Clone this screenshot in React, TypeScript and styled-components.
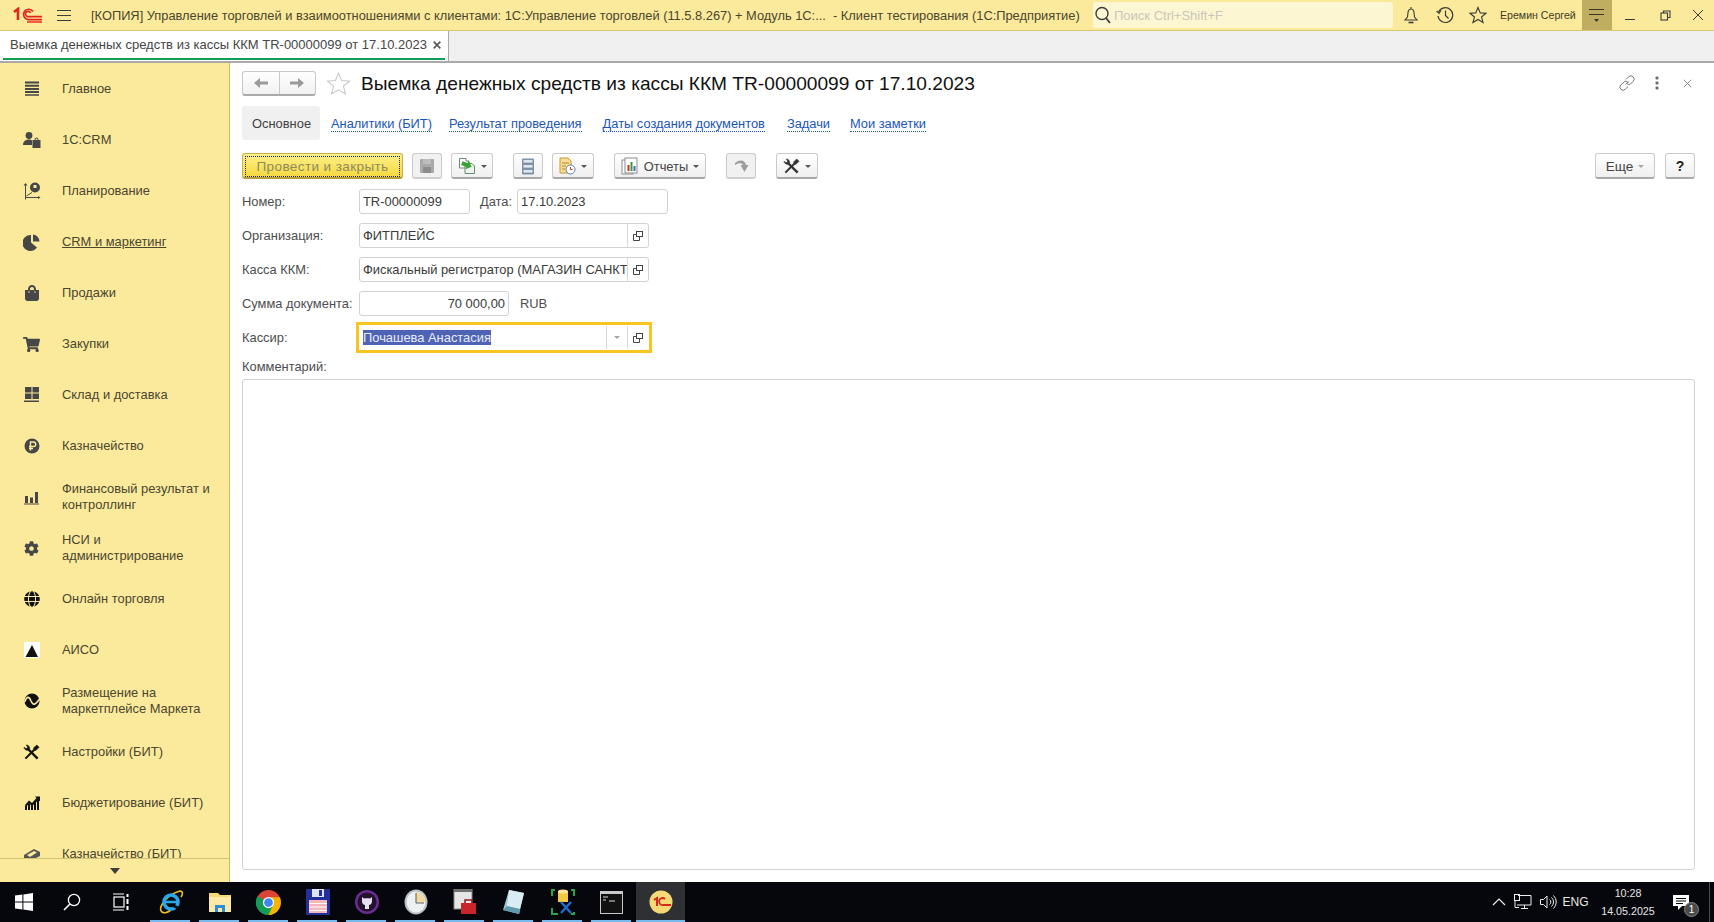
import React from "react";
import styled, { createGlobalStyle } from "styled-components";
import { FaCog, FaShoppingCart, FaGlobe, FaShoppingBag } from "react-icons/fa";

const Global = createGlobalStyle`
  html, body { margin: 0; padding: 0; height: 100%; overflow: hidden; }
  body { font-family: "Liberation Sans", Arial, sans-serif; font-size: 12.9px; color: #4b4b4b; }
`;

const Page = styled.div`
  width: 1714px;
  height: 922px;
  display: flex;
  flex-direction: column;
  overflow: hidden;
  background: #fff;
`;

const TopBar = styled.div`
  height: 30px;
  flex: none;
  display: flex;
  align-items: center;
  background: #fbea9b;
  border-bottom: 1px solid #d6c66f;
`;

const Logo = styled.div`
  width: 30px;
  height: 16px;
  margin-left: 13px;
  display: flex;
`;

const Burger = styled.div`
  margin-left: 14px;
  width: 14px;
  display: flex;
  flex-direction: column;
  gap: 4px;
  & > i { display: block; height: 1px; background: #3d3d3d; }
`;

const AppTitle = styled.div`
  margin-left: 20px;
  width: 1002px;
  flex: none;
  white-space: pre;
  color: #4a4630;
  font-size: 12.85px;
`;

const Search = styled.div`
  width: 300px;
  height: 26px;
  flex: none;
  box-sizing: border-box;
  padding-left: 1px;
  display: flex;
  align-items: center;
  gap: 2px;
  background: #fdf6d2;
  border-radius: 2px;
  color: #c9c6bb;
  font-size: 13px;
`;

const BarIcon = styled.div<{ $w: number }>`
  width: ${(p) => p.$w}px;
  flex: none;
  display: flex;
  justify-content: center;
  align-items: center;
  color: #3d3d3d;
`;

const UserName = styled.div`
  width: 82px;
  flex: none;
  font-size: 10.6px;
  color: #3d3a28;
  white-space: nowrap;
  margin-left: 5px;
`;

const MenuToggle = styled.div`
  width: 30px;
  height: 30px;
  flex: none;
  background: #bfae62;
  display: flex;
  justify-content: center;
  align-items: center;
`;

const TabBar = styled.div`
  height: 32px;
  flex: none;
  display: flex;
  box-sizing: border-box;
  background: #f0f0f0;
  border-bottom: 2px solid #a9a9a9;
`;

const DocTab = styled.div`
  width: 449px;
  box-sizing: border-box;
  background: #fff;
  border-right: 1px solid #a9a9a9;
  padding: 0 3px;
  display: flex;
  flex-direction: column;
`;

const DocTabLabel = styled.div`
  flex: 1;
  display: flex;
  align-items: center;
  justify-content: space-between;
  padding: 0 4px 0 7px;
  white-space: nowrap;
  color: #454545;
  font-size: 13px;
`;

const DocTabLine = styled.div`
  height: 2px;
  margin-bottom: 1px;
  background: #0f9d58;
`;

const Body = styled.div`
  flex: 1;
  display: flex;
  min-height: 0;
`;

const Side = styled.nav`
  width: 230px;
  flex: none;
  box-sizing: border-box;
  display: flex;
  flex-direction: column;
  background: #fbea9b;
  border-right: 1px solid #c9b96b;
`;

const SideList = styled.div`
  flex: 1;
  min-height: 0;
  overflow: hidden;
`;

const SideItem = styled.div`
  height: 51px;
  box-sizing: border-box;
  padding-top: 1px;
  display: flex;
  align-items: center;
`;

const SideIcon = styled.div`
  width: 62px;
  flex: none;
  display: flex;
  justify-content: center;
  color: #474747;
  padding-left: 1px;
  box-sizing: border-box;
`;

const SideText = styled.div<{ $active?: boolean }>`
  line-height: 16px;
  color: #4a4630;
  font-size: 12.9px;
  text-decoration: ${(p) => (p.$active ? "underline" : "none")};
  white-space: pre-line;
`;

const SideFoot = styled.div`
  height: 23px;
  flex: none;
  border-top: 1px solid #d2c273;
  display: flex;
  justify-content: center;
  align-items: center;
`;

const Main = styled.main`
  flex: 1;
  min-width: 0;
  box-sizing: border-box;
  padding: 8px 19px 12px 12px;
  display: flex;
  flex-direction: column;
`;

const HeadRow = styled.div`
  height: 24px;
  flex: none;
  display: flex;
  align-items: center;
`;

const NavGroup = styled.div`
  width: 74px;
  height: 25px;
  box-sizing: border-box;
  display: flex;
  border: 1px solid #c9c9c9;
  border-bottom: 2px solid #aaa;
  border-radius: 3px;
  background: linear-gradient(#fff, #f1f1f1);
`;

const NavCell = styled.div<{ $sep?: boolean }>`
  flex: 1;
  display: flex;
  justify-content: center;
  align-items: center;
  border-left: ${(p) => (p.$sep ? "1px solid #c9c9c9" : "none")};
`;

const StarBox = styled.div`
  margin-left: 10px;
  width: 25px;
  display: flex;
  justify-content: center;
`;

const DocTitle = styled.h1`
  margin: 0 0 0 10px;
  padding-top: 1px;
  font-size: 19.15px;
  font-weight: 400;
  color: #111;
  white-space: nowrap;
  flex: 1;
`;

const HeadTools = styled.div`
  display: flex;
  align-items: center;
  margin-right: -7px;
`;

const HeadTool = styled.div`
  width: 30px;
  display: flex;
  justify-content: center;
  align-items: center;
  color: #777;
`;

const Tabs = styled.div`
  margin-top: 11px;
  height: 34px;
  flex: none;
  display: flex;
  align-items: center;
`;

const TabCurrent = styled.div`
  height: 34px;
  width: 78px;
  box-sizing: border-box;
  padding-left: 10px;
  display: flex;
  align-items: center;
  background: #f0f0f0;
  border-radius: 3px;
  color: #3f3f3f;
`;

const TabLink = styled.a<{ $gap: number }>`
  margin-left: ${(p) => p.$gap}px;
  margin-top: 2px;
  font-size: 12.85px;
  color: #1a55b8;
  white-space: nowrap;
  border-bottom: 1px dotted #1a55b8;
  line-height: 14px;
`;

const Toolbar = styled.div`
  margin-top: 13px;
  height: 26px;
  flex: none;
  display: flex;
`;

const Btn = styled.div<{ $w: number; $gap: number; $off?: boolean }>`
  width: ${(p) => p.$w}px;
  margin-left: ${(p) => p.$gap}px;
  height: 26px;
  box-sizing: border-box;
  padding-top: 1px;
  flex: none;
  display: flex;
  align-items: center;
  justify-content: center;
  gap: 5px;
  border: 1px solid #cacaca;
  border-bottom: 2px solid ${(p) => (p.$off ? "#cfcfcf" : "#a8a8a8")};
  border-radius: 3px;
  background: ${(p) => (p.$off ? "#f1f1f1" : "linear-gradient(#fff, #f0f0f0)")};
  color: #454545;
  white-space: nowrap;
`;

const MoreLabel = styled.span`
  font-size: 13.6px;
`;

const HelpMark = styled.b`
  color: #222;
  font-size: 14px;
`;

const PrimaryBtn = styled.div`
  width: 161px;
  height: 26px;
  flex: none;
  box-sizing: border-box;
  padding: 2px;
  border: 1px solid #c9b24a;
  border-bottom: 2px solid #b29c3c;
  border-radius: 3px;
  background: linear-gradient(#fdf08a, #f6d93f);
`;

const PrimaryInner = styled.div`
  height: 100%;
  border: 1px dotted #1d1d7a;
  display: flex;
  align-items: center;
  justify-content: center;
  color: #8d8a63;
  font-size: 13.5px;
  letter-spacing: 0.4px;
`;

const Spacer = styled.div`
  flex: 1;
`;

const Caret = styled.i<{ $pale?: boolean }>`
  display: block;
  width: 0;
  height: 0;
  border-left: 3px solid transparent;
  border-right: 3px solid transparent;
  border-top: 3px solid ${(p) => (p.$pale ? "#a5a5a5" : "#555")};
`;

const Form = styled.div`
  margin-top: 10px;
  display: flex;
  flex-direction: column;
  gap: 9px;
  flex: none;
`;

const Row = styled.div`
  height: 25px;
  display: flex;
  align-items: center;
`;

const Label = styled.div<{ $w?: number; $gap?: number }>`
  width: ${(p) => p.$w ?? 117}px;
  margin-left: ${(p) => p.$gap ?? 0}px;
  flex: none;
  color: #4d4d4d;
  white-space: nowrap;
`;

const Field = styled.div<{ $w: number; $focus?: boolean }>`
  width: ${(p) => p.$w}px;
  height: 25px;
  flex: none;
  box-sizing: border-box;
  display: flex;
  align-items: center;
  border: 1px solid ${(p) => (p.$focus ? "transparent" : "#d2d2d2")};
  border-radius: ${(p) => (p.$focus ? "0" : "3px")};
  outline: ${(p) => (p.$focus ? "3px solid #f8c520" : "none")};
  color: #3a3a3a;
  background: #fff;
`;

const FieldText = styled.div<{ $right?: boolean }>`
  flex: 1;
  min-width: 0;
  padding: 0 3px;
  overflow: hidden;
  white-space: nowrap;
  text-align: ${(p) => (p.$right ? "right" : "left")};
`;

const Selected = styled.span`
  background: #4f63b5;
  color: #e9ecf8;
  padding: 2px 0;
`;

const FieldBtn = styled.div`
  width: 20px;
  height: 23px;
  flex: none;
  display: flex;
  align-items: center;
  justify-content: center;
  border-left: 1px solid #d9d9d9;
`;

const Currency = styled.div`
  margin-left: 11px;
  color: #4d4d4d;
`;

const CommentLabel = styled.div`
  margin-top: 8px;
  height: 18px;
  line-height: 18px;
  flex: none;
  color: #4d4d4d;
`;

const Comment = styled.div`
  margin-top: 3px;
  flex: 1;
  border: 1px solid #d2d2d2;
  border-radius: 3px;
`;

const Taskbar = styled.footer`
  height: 40px;
  flex: none;
  display: flex;
  align-items: center;
  background: #05070c;
  color: #e8e8e8;
  font-size: 12px;
`;

const TaskSlot = styled.div<{ $w: number; $on?: boolean; $active?: boolean }>`
  width: ${(p) => p.$w}px;
  height: 40px;
  flex: none;
  position: relative;
  display: flex;
  align-items: center;
  justify-content: center;
  background: ${(p) => (p.$active ? "#2e3033" : "transparent")};
  &::after {
    content: "";
    display: ${(p) => (p.$on ? "block" : "none")};
    position: absolute;
    left: ${(p) => (p.$active ? 0 : 4)}px;
    right: ${(p) => (p.$active ? 0 : 5)}px;
    bottom: 0;
    height: 2px;
    background: #76b9ed;
  }
`;

const Tray = styled.div<{ $w: number }>`
  width: ${(p) => p.$w}px;
  flex: none;
  display: flex;
  justify-content: center;
  align-items: center;
`;

const Clock = styled.div`
  width: 70px;
  margin-left: 3px;
  flex: none;
  text-align: center;
  line-height: 18px;
  font-size: 10.7px;
`;

const Badge = styled.div`
  position: absolute;
  right: 0;
  bottom: 5px;
  width: 15px;
  height: 15px;
  border-radius: 50%;
  background: #4a4a4a;
  border: 1px solid #888;
  box-sizing: border-box;
  font-size: 10px;
  line-height: 13px;
  text-align: center;
  color: #fff;
`;

const ShowDesktop = styled.div`
  width: 15px;
  height: 40px;
  flex: none;
  box-sizing: border-box;
  margin-left: 0;
  padding-left: 10px;
  &::before {
    content: "";
    display: block;
    width: 1px;
    height: 40px;
    background: #4c4c4c;
  }
`;

const Logo1C = () => (
  <svg width="30" height="16" viewBox="0 0 30 16" fill="none" stroke="#e3241b">
    <path d="M1 5 L5 2 V13" strokeWidth="2.6" />
    <path d="M20 4.5 A5.2 5.2 0 1 0 15 12.6 H29" strokeWidth="1.7" />
    <path d="M17.5 6 A2.6 2.6 0 1 0 15.5 9.6 H29" strokeWidth="1.6" />
    <path d="M14 15 H29" strokeWidth="1.4" />
  </svg>
);

const Glass = () => (
  <svg width="18" height="20" viewBox="0 0 18 20" fill="none" stroke="#3c3c3c" strokeWidth="1.4">
    <circle cx="8" cy="8.5" r="6" />
    <path d="M12 13 L16 18" strokeWidth="1.8" />
  </svg>
);

const Bell = () => (
  <svg width="16" height="18" viewBox="0 0 16 18" fill="none" stroke="#3c3c3c" strokeWidth="1.1">
    <path d="M8 1 V2.5 M4.5 11 C5 6 5 3 8 3 C11 3 11 6 11.5 11 L14 14 H2 Z" />
    <path d="M5.5 16.5 H10.5" strokeWidth="1.6" />
  </svg>
);

const History = () => (
  <svg width="18" height="18" viewBox="0 0 18 18" fill="none" stroke="#3c3c3c" strokeWidth="1.2">
    <path d="M2.6 6 A7.4 7.4 0 1 1 2 10" />
    <path d="M0.6 5 L3 7.4 L5 4.4" />
    <path d="M9.5 4.5 V9.5 L12.5 12.5" />
  </svg>
);

const Star = ({ size, color }: { size: number; color: string }) => (
  <svg width={size} height={size} viewBox="0 0 24 24" fill="none" stroke={color} strokeWidth={size > 20 ? 1 : 1.5}>
    <path d="M12 2 L15 9.2 L22.6 9.7 L16.7 14.6 L18.7 22 L12 18 L5.3 22 L7.3 14.6 L1.4 9.7 L9 9.2 Z" />
  </svg>
);

const ToggleIcon = () => (
  <svg width="16" height="17" viewBox="0 0 16 17" fill="none" stroke="#3c3826">
    <path d="M0 2.5 H15 M0 7.5 H15" />
    <path d="M5 12 H10 L7.5 15 Z" fill="#3c3826" stroke="none" />
  </svg>
);

const WinMin = () => (
  <svg width="12" height="12" viewBox="0 0 12 12" stroke="#3c3c3c"><path d="M1 10.5 H11" /></svg>
);
const WinRestore = () => (
  <svg width="11" height="11" viewBox="0 0 11 11" fill="none" stroke="#3c3c3c" strokeWidth="1.1">
    <rect x="1" y="3" width="6.5" height="7" />
    <path d="M3.5 3 V1 H10 V7.5 H7.5" />
  </svg>
);
const WinClose = ({ size = 12, color = "#3c3c3c", weight = 1 }: { size?: number; color?: string; weight?: number }) => (
  <svg width={size} height={size} viewBox="0 0 12 12" stroke={color} strokeWidth={weight}><path d="M1 1 L11 11 M11 1 L1 11" /></svg>
);

const Arrow = ({ flip }: { flip?: boolean }) => (
  <svg width="14" height="12" viewBox="0 0 14 12" fill="#9a9a9a" style={{ transform: flip ? "scaleX(-1)" : "none" }}>
    <path d="M0 6 L6 1 V4.5 H14 V7.5 H6 V11 Z" />
  </svg>
);

const LinkIcon = () => (
  <svg width="16" height="16" viewBox="0 0 16 16" fill="none" stroke="#777" strokeWidth="1">
    <path d="M6.5 9.5 L9.5 6.5 M7 4.5 L9.7 1.8 A2.4 2.4 0 0 1 14.2 6.3 L11.5 9 A2.4 2.4 0 0 1 8 8.5" />
    <path d="M9 7.5 A2.4 2.4 0 0 0 5 7 L1.8 10 A2.4 2.4 0 0 0 6.3 14.2 L9 11.5" />
  </svg>
);

const Dots = () => (
  <svg width="4" height="14" viewBox="0 0 4 14" fill="#6f6f6f">
    <rect x="0.5" y="0.5" width="3" height="3" rx="1" />
    <rect x="0.5" y="5.5" width="3" height="3" rx="1" />
    <rect x="0.5" y="10.5" width="3" height="3" rx="1" />
  </svg>
);

const OpenIcon = () => (
  <svg width="10" height="10" viewBox="0 0 10 10" fill="none" stroke="#444">
    <rect x="3.5" y="0.5" width="6" height="5" />
    <path d="M3 3.5 H0.5 V9.5 H6.5 V6" />
  </svg>
);

const SaveIcon = () => (
  <svg width="16" height="16" viewBox="0 0 16 16">
    <rect x="1" y="1" width="14" height="14" rx="1" fill="#a9a9a9" />
    <rect x="4" y="1" width="8" height="5" fill="#bdbdbd" />
    <rect x="4" y="9" width="8" height="6" fill="#8c8c8c" />
  </svg>
);

const CopyIcon = () => (
  <svg width="18" height="18" viewBox="0 0 18 18">
    <path d="M1.5 1.5 H8 V4 H11 V11 H1.5 Z" fill="#fff" stroke="#6d8a6d" />
    <path d="M7 6.5 H14 L16.5 9 V16.5 H7 Z" fill="#eef3ee" stroke="#6d8a6d" />
    <path d="M3.5 6 L9 6 V3.5 L14 8 L9 12.5 V10 L3.5 10 Z" fill="#3aa335" transform="rotate(20 9 8)" />
  </svg>
);

const ListIcon = () => (
  <svg width="14" height="17" viewBox="0 0 14 17">
    <rect x="1" y="0.5" width="12" height="16" rx="1" fill="#7f93a8" />
    <rect x="2.5" y="2" width="9" height="2.6" fill="#dfe7ef" />
    <rect x="2.5" y="7" width="9" height="2.6" fill="#dfe7ef" />
    <rect x="2.5" y="12" width="9" height="2.6" fill="#dfe7ef" />
  </svg>
);

const DocClockIcon = () => (
  <svg width="17" height="18" viewBox="0 0 17 18">
    <path d="M1 1 H9 L12 4 V16 H1 Z" fill="#f8dd92" stroke="#c69a3a" />
    <path d="M3 6 H10 M3 9 H7 M3 12 H6" stroke="#b08a3a" />
    <circle cx="11.5" cy="12.5" r="4.5" fill="#fff" stroke="#5d7fa8" />
    <path d="M11.5 10 V12.5 H13.5" stroke="#c0392b" fill="none" />
  </svg>
);

const ReportIcon = () => (
  <svg width="18" height="18" viewBox="0 0 18 18">
    <rect x="1" y="3" width="11" height="14" fill="#fff" stroke="#8d8d8d" />
    <rect x="4" y="1" width="12" height="15" fill="#fff" stroke="#8d8d8d" />
    <rect x="6.5" y="8" width="2" height="6" fill="#c0392b" />
    <rect x="9.5" y="5" width="2" height="9" fill="#3a9a3a" />
    <rect x="12.5" y="9" width="2" height="5" fill="#3a6fc0" />
  </svg>
);

const TurnIcon = () => (
  <svg width="15" height="14" viewBox="0 0 15 14" fill="#9d9d9d">
    <path d="M1 4 C6 0 11 1 12 6 H14.5 L10.5 13 L6.5 6 H9 C8 4 5 3.5 1 6 Z" />
  </svg>
);

const ToolsX = ({ size, color }: { size: number; color: string }) => (
  <svg width={size} height={size} viewBox="0 0 18 18" fill="none" stroke={color}>
    <path d="M4.5 4.5 L15.5 15.5" strokeWidth="2.6" />
    <path d="M1 3.5 A3.6 3.6 0 0 0 5.5 6.5 L7 5 A3.6 3.6 0 0 0 3.5 1 L5 3.5 L3.5 5 Z" fill={color} strokeWidth="0.6" />
    <path d="M13 5 L2.5 15.5" strokeWidth="2.2" />
    <path d="M11 4.5 L14.5 1 L17 3.5 L13.5 7 Z" fill={color} strokeWidth="0.6" />
  </svg>
);

const icon = (d: React.ReactNode, color = "currentColor", w = 18, h = 18) => (
  <svg width={w} height={h} viewBox="0 0 18 18" fill={color}>{d}</svg>
);

const sideItems: { label: string; icon: React.ReactNode; active?: boolean }[] = [
  {
    label: "Главное",
    icon: icon(<path d="M2 1.5 H16 V3.5 H2 Z M2 4.7 H16 V6.7 H2 Z M2 7.9 H16 V9.9 H2 Z M2 11.1 H16 V13.1 H2 Z M2 14.3 H16 V15.8 H2 Z" />),
  },
  {
    label: "1С:CRM",
    icon: icon(
      <>
        <circle cx="6" cy="4.5" r="3.4" />
        <path d="M0 14 C0 10 3 8.5 6 8.5 C7.5 8.5 8.5 9 9 9.5 V14 Z" />
        <path d="M9.5 9 H17.5 V17 H9.5 Z M11.5 9 C11.5 5.5 15.5 5.5 15.5 9 H14.5 C14.5 7 12.5 7 12.5 9 Z" />
      </>,
    ),
  },
  {
    label: "Планирование",
    icon: icon(
      <>
        <path d="M2.5 1 L4.5 3.5 H3 V15 H15 V14 L17.5 15.5 L15 17 V16 H3 V17.5 H2 V3.5 H0.5 Z" />
        <circle cx="12" cy="5.5" r="5" />
        <path d="M3.5 14 L9 10.5" stroke="currentColor" strokeWidth="1" />
        <path d="M10.5 3 H13.5 V6 H10.5 Z" fill="#fbea9b" />
      </>,
    ),
  },
  {
    label: "CRM и маркетинг",
    active: true,
    icon: icon(
      <>
        <path d="M8 2 V9.5 L14 14.5 A8 8 0 1 1 8 2 Z" />
        <path d="M10 1.5 A7.8 7.8 0 0 1 16.5 8.5 H10 Z" />
      </>,
    ),
  },
  { label: "Продажи", icon: <FaShoppingBag size={16} /> },
  { label: "Закупки", icon: <FaShoppingCart size={17} /> },
  {
    label: "Склад и доставка",
    icon: icon(<path d="M2 1 H8.5 V6.5 H2 Z M9.5 1 H16 V6.5 H9.5 Z M2 7.5 H8.5 V13 H2 Z M9.5 7.5 H16 V13 H9.5 Z M1 14.5 H16 V16 H1 Z" />),
  },
  {
    label: "Казначейство",
    icon: (
      <svg width="16" height="16" viewBox="0 0 16 16">
        <circle cx="8" cy="8" r="7.5" fill="currentColor" />
        <path d="M6.5 12.5 V4 H9.5 A2.2 2.2 0 0 1 9.5 8.5 H5 M5 10.5 H9" fill="none" stroke="#fbea9b" strokeWidth="1.4" />
      </svg>
    ),
  },
  {
    label: "Финансовый результат и\nконтроллинг",
    icon: icon(<path d="M2 8 H5 V15 H2 Z M7 9.5 H10 V15 H7 Z M12 4 H15 V15 H12 Z M1 15.5 H16 V16.5 H1 Z" />),
  },
  { label: "НСИ и\nадминистрирование", icon: <FaCog size={15} /> },
  { label: "Онлайн торговля", icon: <FaGlobe size={16} color="#111" /> },
  {
    label: "АИСО",
    icon: (
      <svg width="16" height="16" viewBox="0 0 16 16">
        <rect width="16" height="16" fill="#fff" />
        <path d="M8 3 L14 15 H1.5 Z" fill="#111" />
      </svg>
    ),
  },
  {
    label: "Размещение на\nмаркетплейсе Маркета",
    icon: (
      <svg width="16" height="16" viewBox="0 0 16 16">
        <circle cx="8" cy="8" r="7.5" fill="#111" />
        <path d="M0.5 9 C3 3 5 3 7 8 C9 12.5 11 12.5 15.5 6" fill="none" stroke="#fbea9b" strokeWidth="1.6" />
      </svg>
    ),
  },
  { label: "Настройки (БИТ)", icon: <ToolsX size={17} color="#111" /> },
  {
    label: "Бюджетирование (БИТ)",
    icon: (
      <svg width="16" height="16" viewBox="0 0 16 16" fill="#111">
        <path d="M1 15 H3 V11 H1 Z M4 15 H6 V9 H4 Z M7 15 H9 V10 H7 Z M10 15 H12 V7 H10 Z M13 15 H15 V5 H13 Z" />
        <path d="M1 10 L5 5.5 L8 8 L12.5 3 L11 1.5 H16 V6.5 L14.5 5 L8 11 L5 8.5 L2 12 Z" />
      </svg>
    ),
  },
  {
    label: "Казначейство (БИТ)",
    icon: (
      <svg width="16" height="14" viewBox="0 0 16 14" fill="#555">
        <path d="M0 8 L10 2 L16 5 V9 L6 14 L0 11 Z" />
        <path d="M3 8 L10 4 L13 5.5 L6 10 Z" fill="#fbea9b" />
      </svg>
    ),
  },
];

const Win = () => (
  <svg width="18" height="18" viewBox="0 0 18 18" fill="#fff">
    <path d="M0 2.6 L7.4 1.6 V8.5 H0 Z M8.4 1.4 L18 0 V8.5 H8.4 Z M0 9.5 H7.4 V16.4 L0 15.4 Z M8.4 9.5 H18 V18 L8.4 16.6 Z" />
  </svg>
);
const SearchTb = () => (
  <svg width="18" height="18" viewBox="0 0 18 18" fill="none" stroke="#fff" strokeWidth="1.3">
    <circle cx="11" cy="7" r="5.6" />
    <path d="M7 11 L1 17" strokeWidth="1.6" />
  </svg>
);
const TaskView = () => (
  <svg width="17" height="18" viewBox="0 0 17 18" fill="none" stroke="#fff" strokeWidth="1.2">
    <path d="M0 1 H11 M0 17 H11" />
    <rect x="1" y="4" width="10" height="10" />
    <path d="M14.5 1 V4 M14.5 6 V11 M14.5 13 V17" strokeWidth="2" />
  </svg>
);
const IE = () => (
  <svg width="26" height="26" viewBox="0 0 26 26" fill="none">
    <path d="M3 22 C1 18 8 6 22 2 C25 2 25 5 23 8" stroke="#f2c316" strokeWidth="1.6" />
    <path d="M3 22 C5 25 9 24 13 21" stroke="#f2c316" strokeWidth="1.6" />
    <circle cx="13" cy="13" r="7" stroke="#2ba6e6" strokeWidth="3.6" />
    <path d="M7 13 H20" stroke="#2ba6e6" strokeWidth="2.6" />
    <path d="M16 17 L22 20" stroke="#05070c" strokeWidth="3" />
  </svg>
);
const Folder = () => (
  <svg width="24" height="24" viewBox="0 0 24 24">
    <path d="M1 3 H10 L12 5 H23 V22 H1 Z" fill="#f8d775" />
    <rect x="1" y="7" width="22" height="15" fill="#fce9a8" />
    <path d="M7 22 V15 H17 V22 H14 V18 H10 V22 Z" fill="#2a8fd8" />
  </svg>
);
const Chrome = () => (
  <svg width="25" height="25" viewBox="0 0 24 24">
    <circle cx="12" cy="12" r="12" fill="#db4437" />
    <path d="M12 12 L1.6 6 A12 12 0 0 0 12 24 L18 13.5 Z" fill="#0f9d58" />
    <path d="M12 7 H22.8 A12 12 0 0 1 12 24 L17 13 Z" fill="#f4b400" />
    <circle cx="12" cy="12" r="5.4" fill="#fff" />
    <circle cx="12" cy="12" r="4.2" fill="#4285f4" />
  </svg>
);
const Floppy = () => (
  <svg width="24" height="26" viewBox="0 0 24 26">
    <rect width="24" height="26" rx="1" fill="#23309a" />
    <rect x="6" y="0" width="12" height="8" fill="#dfe4f2" />
    <rect x="13" y="1" width="3" height="6" fill="#23309a" />
    <rect x="3" y="11" width="18" height="13" fill="#f6b6bd" />
    <path d="M3 14.5 H21 M3 18 H21 M3 21.5 H21" stroke="#fff" />
  </svg>
);
const GitHubTb = () => (
  <svg width="24" height="24" viewBox="0 0 24 24">
    <circle cx="12" cy="12" r="12" fill="#6b2c91" />
    <circle cx="12" cy="12" r="9.6" fill="#22122e" />
    <path d="M7 7 L9 8.5 C11 8 13 8 15 8.5 L17 7 V11 C17 14 15 15 14 15 V19 H10 V15 C9 15 7 14 7 11 Z" fill="#e8dff0" />
  </svg>
);
const ClockIcon = () => (
  <svg width="24" height="26" viewBox="0 0 24 26">
    <ellipse cx="12" cy="13" rx="11.5" ry="12.5" fill="#b7c0c6" />
    <ellipse cx="12" cy="13" rx="9.5" ry="10.5" fill="#eef1f2" />
    <path d="M12 13 V3 A9.5 10 0 0 1 21.5 13 Z" fill="#f2d9a0" />
    <path d="M12 4 V14 H20" stroke="#5a5a5a" fill="none" />
  </svg>
);
const Toolbox = () => (
  <svg width="24" height="26" viewBox="0 0 24 26">
    <rect x="1" y="0" width="18" height="20" fill="#e6e6e6" stroke="#888" />
    <rect x="1" y="0" width="18" height="3" fill="#6f6f6f" />
    <path d="M8 14 H23 V25 H8 Z" fill="#c9262b" />
    <path d="M12 14 V11 H19 V14" fill="none" stroke="#8c1b1e" strokeWidth="1.5" />
  </svg>
);
const Notepad = () => (
  <svg width="24" height="26" viewBox="0 0 24 26">
    <path d="M7 1 L22 4 L17 25 L1 21 Z" fill="#9cc7d6" />
    <path d="M7 1 L22 4 L18 20 L5 17 Z" fill="#d9ecf1" />
    <path d="M1 21 L17 25 L18 20 L5 17 Z" fill="#5e9bb0" />
  </svg>
);
const DbTool = () => (
  <svg width="24" height="26" viewBox="0 0 24 26" fill="none">
    <path d="M7 2 H17 V13 H7 Z" fill="#f2c744" />
    <ellipse cx="12" cy="2.5" rx="5" ry="2" fill="#fbe39a" />
    <path d="M1 7 V1 H4 M20 1 H23 V7 M1 19 V25 H7 M23 23 V25 H20" stroke="#2aa34a" strokeWidth="2" />
    <path d="M10 24 L20 13 M20 24 L10 13" stroke="#1f6fd0" strokeWidth="2.4" />
  </svg>
);
const Cmd = () => (
  <svg width="23" height="23" viewBox="0 0 23 23">
    <rect width="23" height="23" fill="#c9c9c9" />
    <rect x="1" y="3" width="21" height="19" fill="#111" />
    <path d="M3 6 H8 M3 9 H6 M9 10 H15" stroke="#ddd" strokeWidth="1.2" />
  </svg>
);
const OneC = () => (
  <svg width="24" height="24" viewBox="0 0 24 24" fill="none">
    <circle cx="12" cy="12" r="11.5" fill="#f6d977" />
    <path d="M5 10 L8 8 V16" stroke="#d9261c" strokeWidth="2" />
    <path d="M16 9 A3.5 3.5 0 1 0 14 15 H22" stroke="#d9261c" strokeWidth="1.8" />
  </svg>
);

const taskApps: { node: React.ReactNode; active?: boolean }[] = [
  { node: <IE /> },
  { node: <Folder /> },
  { node: <Chrome /> },
  { node: <Floppy /> },
  { node: <GitHubTb /> },
  { node: <ClockIcon /> },
  { node: <Toolbox /> },
  { node: <Notepad /> },
  { node: <DbTool /> },
  { node: <Cmd /> },
  { node: <OneC />, active: true },
];

const tabLinks: [string, number][] = [
  ["Аналитики (БИТ)", 11],
  ["Результат проведения", 17],
  ["Даты создания документов", 21],
  ["Задачи", 22],
  ["Мои заметки", 20],
];

export default function App() {
  return (
    <Page>
      <Global />
      <TopBar>
        <Logo><Logo1C /></Logo>
        <Burger><i /><i /><i /></Burger>
        <AppTitle>[КОПИЯ] Управление торговлей и взаимоотношениями с клиентами: 1С:Управление торговлей (11.5.8.267) + Модуль 1С:...  - Клиент тестирования (1С:Предприятие)</AppTitle>
        <Search><Glass />Поиск Ctrl+Shift+F</Search>
        <BarIcon $w={36}><Bell /></BarIcon>
        <BarIcon $w={32}><History /></BarIcon>
        <BarIcon $w={34}><Star size={18} color="#3c3c3c" /></BarIcon>
        <UserName>Еремин Сергей</UserName>
        <MenuToggle><ToggleIcon /></MenuToggle>
        <BarIcon $w={36}><WinMin /></BarIcon>
        <BarIcon $w={34}><WinRestore /></BarIcon>
        <BarIcon $w={32}><WinClose /></BarIcon>
      </TopBar>
      <TabBar>
        <DocTab>
          <DocTabLabel>
            Выемка денежных средств из кассы ККМ TR-00000099 от 17.10.2023
            <WinClose size={8} color="#555" weight={2.4} />
          </DocTabLabel>
          <DocTabLine />
        </DocTab>
      </TabBar>
      <Body>
        <Side>
          <SideList>
            {sideItems.map((s) => (
              <SideItem key={s.label}>
                <SideIcon>{s.icon}</SideIcon>
                <SideText $active={s.active}>{s.label}</SideText>
              </SideItem>
            ))}
          </SideList>
          <SideFoot><svg width="10" height="6" viewBox="0 0 10 6" fill="#3d3d3d"><path d="M0 0 H10 L5 6 Z" /></svg></SideFoot>
        </Side>
        <Main>
          <HeadRow>
            <NavGroup>
              <NavCell><Arrow /></NavCell>
              <NavCell $sep><Arrow flip /></NavCell>
            </NavGroup>
            <StarBox><Star size={25} color="#c4c4c4" /></StarBox>
            <DocTitle>Выемка денежных средств из кассы ККМ TR-00000099 от 17.10.2023</DocTitle>
            <HeadTools>
              <HeadTool><LinkIcon /></HeadTool>
              <HeadTool><Dots /></HeadTool>
              <HeadTool><WinClose size={9} color="#666" /></HeadTool>
            </HeadTools>
          </HeadRow>
          <Tabs>
            <TabCurrent>Основное</TabCurrent>
            {tabLinks.map(([t, g]) => (
              <TabLink key={t} $gap={g}>{t}</TabLink>
            ))}
          </Tabs>
          <Toolbar>
            <PrimaryBtn><PrimaryInner>Провести и закрыть</PrimaryInner></PrimaryBtn>
            <Btn $w={30} $gap={9} $off><SaveIcon /></Btn>
            <Btn $w={42} $gap={9}><CopyIcon /><Caret /></Btn>
            <Btn $w={30} $gap={20}><ListIcon /></Btn>
            <Btn $w={42} $gap={9}><DocClockIcon /><Caret /></Btn>
            <Btn $w={92} $gap={20}><ReportIcon />Отчеты<Caret /></Btn>
            <Btn $w={30} $gap={20} $off><TurnIcon /></Btn>
            <Btn $w={42} $gap={20}><ToolsX size={17} color="#333" /><Caret /></Btn>
            <Spacer />
            <Btn $w={60} $gap={0}><MoreLabel>Еще</MoreLabel><Caret $pale /></Btn>
            <Btn $w={30} $gap={10}><HelpMark>?</HelpMark></Btn>
          </Toolbar>
          <Form>
            <Row>
              <Label>Номер:</Label>
              <Field $w={111}><FieldText>TR-00000099</FieldText></Field>
              <Label $w={37} $gap={10}>Дата:</Label>
              <Field $w={151}><FieldText>17.10.2023</FieldText></Field>
            </Row>
            <Row>
              <Label>Организация:</Label>
              <Field $w={290}><FieldText>ФИТПЛЕЙС</FieldText><FieldBtn><OpenIcon /></FieldBtn></Field>
            </Row>
            <Row>
              <Label>Касса ККМ:</Label>
              <Field $w={290}><FieldText>Фискальный регистратор (МАГАЗИН САНКТ-ПЕТЕРБУРГ)</FieldText><FieldBtn><OpenIcon /></FieldBtn></Field>
            </Row>
            <Row>
              <Label>Сумма документа:</Label>
              <Field $w={150}><FieldText $right>70 000,00</FieldText></Field>
              <Currency>RUB</Currency>
            </Row>
            <Row>
              <Label>Кассир:</Label>
              <Field $w={290} $focus>
                <FieldText><Selected>Почашева Анастасия</Selected></FieldText>
                <FieldBtn><Caret $pale /></FieldBtn>
                <FieldBtn><OpenIcon /></FieldBtn>
              </Field>
            </Row>
          </Form>
          <CommentLabel>Комментарий:</CommentLabel>
          <Comment />
        </Main>
      </Body>
      <Taskbar>
        <TaskSlot $w={48}><Win /></TaskSlot>
        <TaskSlot $w={48}><SearchTb /></TaskSlot>
        <TaskSlot $w={50}><TaskView /></TaskSlot>
        {taskApps.map((a, i) => (
          <TaskSlot key={i} $w={49} $on $active={a.active}>{a.node}</TaskSlot>
        ))}
        <Spacer />
        <Tray $w={24}>
          <svg width="14" height="8" viewBox="0 0 14 8" fill="none" stroke="#eee" strokeWidth="1.2"><path d="M1 7 L7 1 L13 7" /></svg>
        </Tray>
        <Tray $w={24}>
          <svg width="18" height="16" viewBox="0 0 18 16" fill="none" stroke="#eee"><path d="M4 1.5 H17 V11 H3" /><rect x="0.5" y="0.5" width="5" height="6" /><path d="M1 6 V13.5 H5 M7 14.5 H14 M10.5 11 V14.5" /></svg>
        </Tray>
        <Tray $w={26}>
          <svg width="17" height="14" viewBox="0 0 17 14" fill="none" stroke="#eee"><path d="M0.5 4.5 H3.5 L7 1 V13 L3.5 9.5 H0.5 Z M9.5 4.5 A3 3 0 0 1 9.5 9.5 M11.5 2.5 A6 6 0 0 1 11.5 11.5 M13.5 0.5 A9 9 0 0 1 13.5 13.5" /></svg>
        </Tray>
        <Tray $w={29}>ENG</Tray>
        <Clock>10:28<br />14.05.2025</Clock>
        <TaskSlot $w={36}>
          <svg width="16" height="15" viewBox="0 0 16 15" fill="#fff"><path d="M0 0 H16 V11 H9 L5 15 V11 H0 Z" /><path d="M3 3.5 H13 M3 6 H13 M3 8.5 H10" stroke="#05070c" /></svg>
          <Badge>1</Badge>
        </TaskSlot>
        <ShowDesktop />
      </Taskbar>
    </Page>
  );
}
